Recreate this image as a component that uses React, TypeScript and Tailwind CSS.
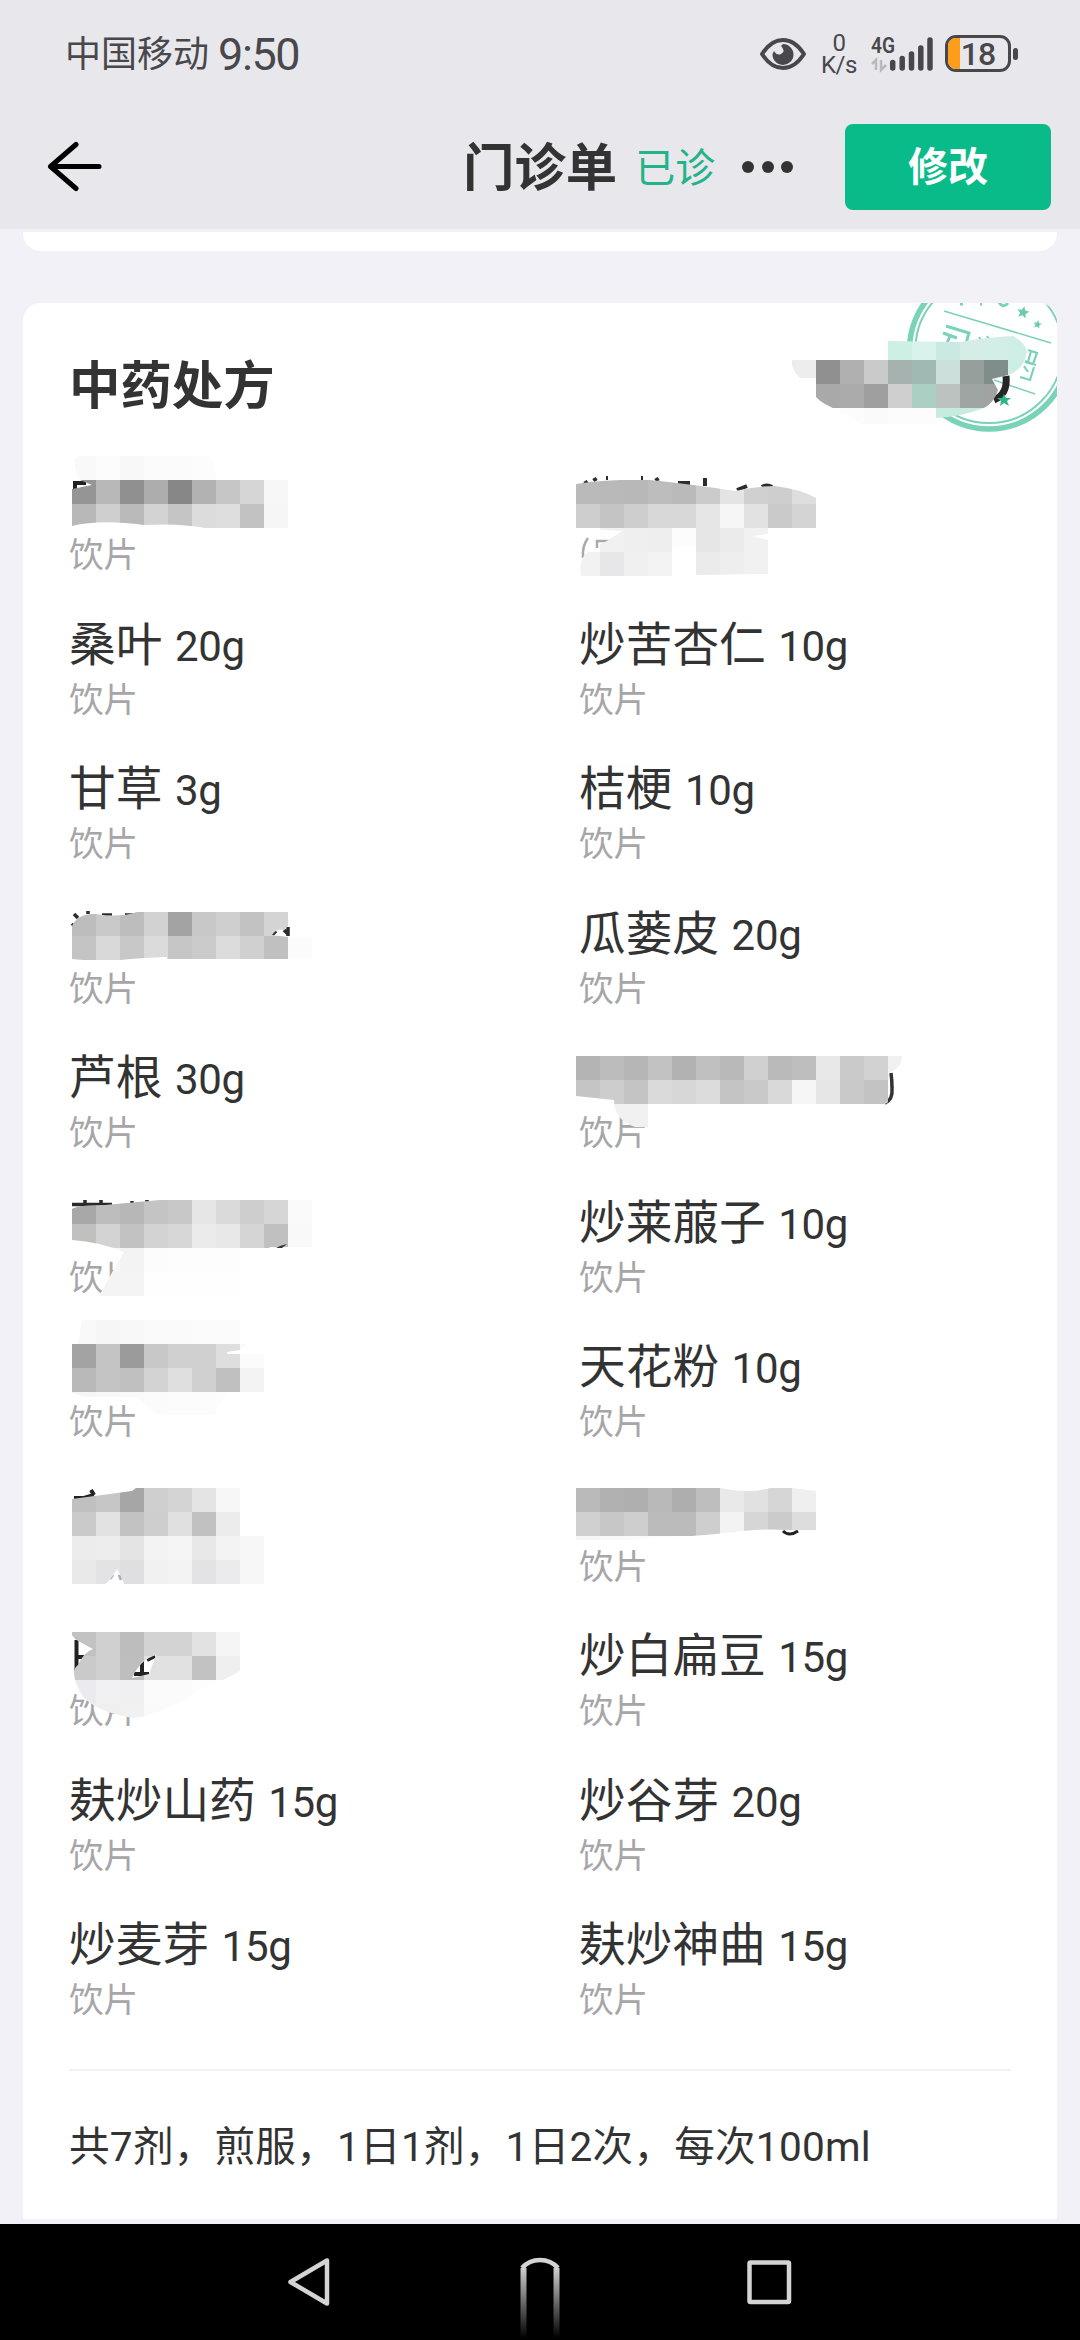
type Herb = { name?: string; dose?: string; note?: string };

const herbs: Herb[] = [
  { note: "饮片" },
  {},
  { name: "桑叶", dose: "20g", note: "饮片" },
  { name: "炒苦杏仁", dose: "10g", note: "饮片" },
  { name: "甘草", dose: "3g", note: "饮片" },
  { name: "桔梗", dose: "10g", note: "饮片" },
  { note: "饮片" },
  { name: "瓜蒌皮", dose: "20g", note: "饮片" },
  { name: "芦根", dose: "30g", note: "饮片" },
  { note: "饮片" },
  { note: "饮片" },
  { name: "炒莱菔子", dose: "10g", note: "饮片" },
  { note: "饮片" },
  { name: "天花粉", dose: "10g", note: "饮片" },
  {},
  { note: "饮片" },
  { note: "饮片" },
  { name: "炒白扁豆", dose: "15g", note: "饮片" },
  { name: "麸炒山药", dose: "15g", note: "饮片" },
  { name: "炒谷芽", dose: "20g", note: "饮片" },
  { name: "炒麦芽", dose: "15g", note: "饮片" },
  { name: "麸炒神曲", dose: "15g", note: "饮片" },
];

type Patch = { x: number; y: number; rows: string[]; clip: string };

const CELL = 24;

// every patch is a grid of 24px cells, "--" leaves a cell open
const patches: Patch[] = [
  {
    x: 72,
    y: 456,
    rows: [
      "f9 fc f8 fb fb fc -- -- --",
      "95 b8 90 ad 87 b2 c6 d6 f7",
      "b8 cf ba d3 c5 dc de c2 f6",
    ],
    clip: "M78 456H208Q216 458 216 480H288V528H205Q180 523 144 525Q100 519 72 526V489L92 485L80 480Q70 462 78 456Z",
  },
  {
    x: 576,
    y: 480,
    rows: [
      "ba b9 b8 bd ba cb e4 d0 ce de",
      "ce c4 ce d8 d8 e6 f6 e2 ca d4",
      "-- f1 ef ee fc e6 eb f1 -- --",
      "f2 e7e7ea f0 f3 fc eb ee f1 -- --",
    ],
    clip: "M576 484Q610 479 650 480Q690 484 735 491Q755 486 775 486Q800 489 816 498V528H768V534L752 536L768 540V574L696 575V545L672 549V576H581Q578 556 592 549Q608 541 622 531L576 528Z",
  },
  {
    x: 72,
    y: 912,
    rows: ["bd c9 bd d2 a3 c8 cf c2 d4 --", "c4 d9 c8 db c6 cb dc d0 c0 fb"],
    clip: "M72 926Q78 913 96 914Q120 918 137 912H288V926L284 930Q277 928 272 935L288 937H312V959H167V957Q140 958 120 960Q95 962 72 959Z",
  },
  {
    x: 576,
    y: 1056,
    rows: [
      "b4 bc b6 c2 b2 c0 b9 d0 ba be e8 ca d2 f1",
      "c5 cd c4 da d7 dc c4 c9 d9 f6 e6 c9 c3 --",
      "-- f1 f1 -- -- -- -- -- -- -- -- -- -- --",
    ],
    clip: "M576 1056H902Q902 1066 893 1071L888 1073Q895 1101 885 1104H648V1127H635Q614 1120 614 1100L576 1096Z",
  },
  {
    x: 72,
    y: 1200,
    rows: [
      "a8 bd b7 c4 c8 e6 da ce d6 fa",
      "c0c0be d3 c2 d3 d7 eb e8 d5 c0 f9",
      "-- f7 f3 fc fd fd fd -- -- --",
      "-- f4 f4 fe fe fe fe -- -- --",
    ],
    clip: "M72 1209Q78 1205 105 1205L160 1200H312V1247H270Q262 1262 248 1296H99Q112 1272 124 1252Q100 1242 72 1240Z",
  },
  {
    x: 72,
    y: 1320,
    rows: [
      "f9 f6 f8 fa fa fb fb fd",
      "a3 c4 9b c8 d0 d0 de fb",
      "b9 c4 c0 d3 df d0 c0 f3",
      "f6 f8 f9 fb fc fc fd --",
    ],
    clip: "M82 1320H240V1344H248L240 1350L227 1352V1354L264 1354V1392H228L214 1415H160Q146 1408 138 1397H84L72 1393V1344H78Z",
  },
  {
    x: 72,
    y: 1488,
    rows: [
      "c0 c6 a6 cf d4 e4 f7 --",
      "ca e2 c2 ce e0 c1 ec --",
      "ec ed e4 f3 f5 e8 f3 f7",
      "e9 e3e3e5 dfdfe1 f1 f3 e3e3e6 ebebed f7",
    ],
    clip: "M72 1499L132 1491L136 1488H240V1536H264V1584H124Q121 1575 117 1569Q111 1580 105 1584H72Z",
  },
  {
    x: 576,
    y: 1488,
    rows: ["ba b1 af b9 ae be e9 e1 d6 ef", "d0 c7 ce bb bb ce f3 d6 cb dd", "f6 f8 fa fc fc -- -- -- -- --"],
    clip: "M576 1488H720Q750 1494 770 1488H792L816 1491V1530H790Q760 1528 725 1533Q690 1537 660 1537L630 1540H576Z",
  },
  {
    x: 72,
    y: 1632,
    rows: [
      "c2 d0 bd d3 d3 e2 f5",
      "ca d0 be e1 e1 c2 ef",
      "ebebef f1f1f3 f0f0f2 fb fb fd --",
      "f0 ef f1 fa fc -- --",
    ],
    clip: "M72 1632H240V1671Q225 1680 200 1690Q160 1716 132 1718Q98 1712 83 1697Q68 1672 78 1665Q84 1652 93 1649L80 1642Q75 1640 72 1635ZM156 1655Q140 1660 132 1678L149 1674Z",
  },
  {
    x: 792,
    y: 336,
    rows: [
      "-- -- -- -- cdf0e5 d9f2ec cae9e2 d5ece7 d3eee6 cfeee6",
      "ed 90 b0 ca a6b2af a0bab3 cddfda 979f9d 7f8e8a cdeee5",
      "f6 a9 ab 9f cf abcfc3 bcc2c0 9ea5a3 a0a3a2 --",
      "-- -- fc fa fc fc c8ebe1 c8ebe1 -- --",
    ],
    clip: "M888 341L960 342Q988 337 1013 336Q1026 343 1027 352Q1024 370 1008 375L992 379L998 390Q994 403 984 408Q960 417 936 418V424H860L840 411Q822 404 816 397V378H800Q790 368 792 360H888Z",
  },
];

// leftovers of characters that stick out around the patches
const leftovers = [
  { d: "M73 483H86M75 483V489", w: 4, c: "#222" },
  { d: "M585 481L587 484M594 478L596 481M606 478H608M641 478H643M656 478L658 481M678 483H690M705 478V486M737 490L747 486M762 487Q767 484 772 487", w: 4, c: "#2c2c2c" },
  { d: "M588 538Q582 546 583 558M597 548V541H610M666 541Q670 545 670 551", w: 2.5, c: "#aaa" },
  { d: "M74 914L78 918M88 911V914M72 926L74 924M102 915H112M125 915H135M272 935L276 931M284 930L288 934M288 927V936", w: 3.5, c: "#2c2c2c" },
  { d: "M891 1073Q892 1080 892 1088Q893 1100 885 1103", w: 3.5, c: "#333" },
  { d: "M72 1204.5H112M85 1200V1207M101 1200V1207M132 1201V1204M147 1200V1203", w: 3.5, c: "#2a2a2a" },
  { d: "M74 1498H84L94 1495M91 1490L94 1495", w: 4, c: "#222" },
  { d: "M110 1579L113 1575M119 1575L121 1580", w: 2.5, c: "#aaa" },
  { d: "M783 1531Q789 1537 798 1531", w: 3, c: "#222" },
  { d: "M76.5 1640V1671M76 1657H84M142 1658V1673M134 1674H149M147 1660L155 1656", w: 4, c: "#222" },
  { d: "M1006 376Q1008 394 994 400", w: 7, c: "#262626" },
];

function Mosaic() {
  return (
    <svg className="pointer-events-none absolute left-0 top-0" width="1080" height="2220" viewBox="0 0 1080 2220">
      {leftovers.map((l) => (
        <path key={l.d} d={l.d} stroke={l.c} strokeWidth={l.w} fill="none" />
      ))}
      {patches.map((p, i) => (
        <g key={i} clipPath={`url(#patch-${i})`} shapeRendering="crispEdges">
          <clipPath id={`patch-${i}`}>
            <path d={p.clip} clipRule="evenodd" />
          </clipPath>
          {p.rows.map((row, r) =>
            row.split(" ").map((v, c) =>
              v === "--" ? null : (
                <rect
                  key={`${r}-${c}`}
                  x={p.x + c * CELL}
                  y={p.y + r * CELL}
                  width={CELL}
                  height={CELL}
                  fill={v.length === 2 ? `#${v}${v}${v}` : `#${v}`}
                />
              )
            )
          )}
        </g>
      ))}
      <path d="M276 1248L280 1246L287 1244L282 1248Z" fill="#333" />
      <path d="M1004 394l2 4 5 0-4 3 2 5-5-3-4 3 1-5-4-3 5 0z" fill="#2fb48d" />
    </svg>
  );
}

function Star({ x, y, r }: { x: number; y: number; r: number }) {
  return (
    <path
      transform={`translate(${x} ${y}) rotate(12) scale(${r})`}
      d="M0-1L.27-.36.95-.31.43.14.59.81 0 .45-.59.81-.43.14-.95-.31-.27-.36Z"
      fill="#6ccbb0"
      stroke="none"
    />
  );
}

function Seal() {
  return (
    <svg className="absolute right-0 top-0" width="157" height="140" viewBox="900 303 157 140" fill="none" stroke="#7ad2b8">
      <circle cx="989" cy="349.6" r="79.5" strokeWidth="5.5" />
      <circle cx="989" cy="349.6" r="73.5" strokeWidth="2" />
      <path d="M944 311L1051 343M994 380L1035 394" strokeWidth="1.5" />
      <path d="M946 326L969 333L963 354L950 350M943 333L957 338M950 336L944 350" strokeWidth="3" />
      <path d="M979 337L981 340M987 336L989 339" strokeWidth="2" />
      <path d="M1028 350L1037 353L1033 364L1025 361M1031 351L1028 362M1036 365L1025 362M1034 367L1030 380L1020 377M1028 372L1024 366" strokeWidth="2.2" />
      <path d="M999 302Q1003 309 1008 303M960 304H963M980 304H982" strokeWidth="3" />
      <Star x={1023} y={312.5} r={6.5} />
      <Star x={1037.5} y={324.5} r={4.5} />
    </svg>
  );
}

function StatusBar() {
  return (
    <div className="flex h-[107px] items-center justify-between pl-[65px] pr-[62px] text-[#48484c]">
      <div className="flex items-center">
        <span className="pt-[2px] text-[36px] leading-[40px]">中国移动</span>
        <span className="ml-[9px] pt-[2px] text-[45px] leading-[46px] tracking-[-1.4px]">9:50</span>
      </div>
      <div className="flex items-center">
        <svg width="46" height="32" viewBox="0 0 46 32" fill="none">
          <path d="M2 16Q11 2 23 2Q35 2 44 16Q35 30 23 30Q11 30 2 16Z" stroke="currentColor" strokeWidth="4" strokeLinejoin="round" />
          <path d="M23 6A10.5 10.5 0 1 1 12.5 16L14 13Q17 18 21 16Q26 13 21 8Z" fill="currentColor" />
        </svg>
        <div className="ml-[15px] flex w-[36px] flex-col items-center text-[24px] leading-[22px] tracking-[-0.4px]">
          <span>0</span>
          <span>K/s</span>
        </div>
        <svg className="ml-[13px]" width="64" height="48" viewBox="870 30 64 48">
          <text x="871" y="53" fontSize="22" fontWeight="600" textLength="24" lengthAdjust="spacingAndGlyphs" fill="#48484c">4G</text>
          <path d="M872 64L876 60V70M881 60V70L886 65" stroke="#b9b9bd" strokeWidth="2.5" fill="none" />
          <path d="M892.7 62.5V68M902.2 58.5V68M911.5 54V68M920.8 48V68M930 40V68" stroke="#48484c" strokeWidth="5.5" strokeLinecap="round" />
        </svg>
        <div className="relative ml-[11px] flex h-[37px] w-[66px] items-center justify-center overflow-hidden rounded-[11px] border-[3px] border-[#48484c]">
          <div className="absolute left-0 top-0 h-full w-[12px] bg-[#ff9c1a]" />
          <span className="relative text-[32px] font-medium leading-[32px] tracking-[-1px]">18</span>
        </div>
        <div className="ml-[2px] h-[12px] w-[5px] rounded-full bg-[#48484c]" />
      </div>
    </div>
  );
}

function Header() {
  return (
    <header className="h-[229px] bg-[#e8e7ec]">
      <StatusBar />
      <div className="flex h-[120px] items-center pl-[46px] pr-[29px]">
        <svg width="58" height="52" viewBox="46 140 58 52" fill="none" stroke="#000" strokeWidth="5" strokeLinecap="round" strokeLinejoin="round">
          <path d="M76 143.5L50.5 165.5L76 187.5M51 165.5H99" />
        </svg>
        <h1 className="ml-[359px] pt-[4px] text-[51.4px] font-bold leading-[60px] text-[#333]">门诊单</h1>
        <span className="ml-[18px] pt-[3px] text-[40px] leading-[46px] text-[#22b389]">已诊</span>
        <div className="ml-[27px] flex gap-[7.5px]">
          <i className="size-[12px] rounded-full bg-[#333]" />
          <i className="size-[12px] rounded-full bg-[#333]" />
          <i className="size-[12px] rounded-full bg-[#333]" />
        </div>
        <button className="ml-auto h-[86px] w-[206px] rounded-[8px] bg-[#0abb8a] pt-[2px] text-[40px] font-bold text-white">修改</button>
      </div>
    </header>
  );
}

function HerbItem({ name, dose, note }: Herb) {
  return (
    <div className="h-[144.5px]">
      <p className="h-[62px] text-[46.7px] leading-[60px] text-[#333]">
        {name}
        {dose && <span className="ml-[12.5px] text-[42px] tracking-[-0.3px]">{dose}</span>}
      </p>
      <p className="text-[34.6px] leading-[46px] text-[#a6a6a8]">{note}</p>
    </div>
  );
}

function NavBar() {
  return (
    <nav className="h-[116px] bg-black">
      <svg width="1080" height="116" viewBox="0 2224 1080 116" fill="none" stroke="#d4d4d4" strokeWidth="4.5" strokeLinejoin="round">
        <defs>
          <linearGradient id="fade" x1="0" y1="2266" x2="0" y2="2338" gradientUnits="userSpaceOnUse">
            <stop offset="0" stopColor="#d4d4d4" />
            <stop offset="0.5" stopColor="#6a6a6a" />
            <stop offset="1" stopColor="#000" />
          </linearGradient>
        </defs>
        <path d="M327 2260.5V2303.5L290.5 2282Z" />
        <path d="M523.5 2268V2338M556.5 2268V2338" stroke="url(#fade)" strokeWidth="6" />
        <path d="M522 2268Q529 2260 540 2260Q551 2260 558 2268" />
        <rect x="749.5" y="2262.5" width="39.5" height="39.5" rx="1" />
      </svg>
    </nav>
  );
}

export default function App() {
  return (
    <main className="relative flex h-[2340px] w-[1080px] flex-col overflow-hidden bg-[#f2f1f7] font-['Roboto','Noto_Sans_CJK_SC',sans-serif]">
      <Header />
      <div className="mx-[23px] mt-[3px] h-[19px] rounded-b-[18px] bg-white" />
      <section className="relative mx-[23px] mt-[52px] h-[1916px] overflow-hidden rounded-t-[18px] bg-white px-[46px]">
        <Seal />
        <h2 className="pt-[54px] text-[51.4px] font-bold leading-[60px] text-[#333]">中药处方</h2>
        <div className="mt-[53px] grid grid-cols-[510px_1fr]">
          {herbs.map((h, i) => (
            <HerbItem key={i} {...h} />
          ))}
        </div>
        <hr className="mt-[9px] border-t-2 border-[#f2f2f4]" />
        <p className="mt-[46px] whitespace-nowrap text-[40.6px] leading-[60px] tracking-[0.25px] text-[#333]">共7剂，煎服，1日1剂，1日2次，每次100ml</p>
      </section>
      <div className="h-[5px]" />
      <NavBar />
      <Mosaic />
    </main>
  );
}
